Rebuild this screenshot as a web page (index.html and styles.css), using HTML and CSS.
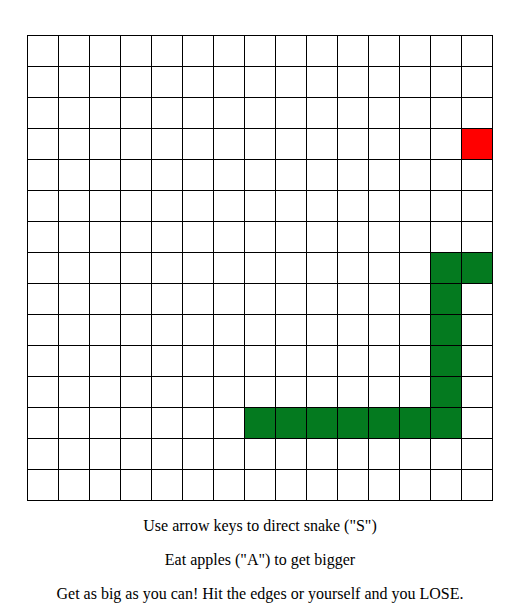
FILE: index.html
```html
<!DOCTYPE html>
<html>
<head>
<meta charset="utf-8">
<link rel="stylesheet" href="styles.css">
</head>
<body>
<div class="board" id="board"></div>
<p>Use arrow keys to direct snake ("S")</p>
<p>Eat apples ("A") to get bigger</p>
<p>Get as big as you can! Hit the edges or yourself and you LOSE.</p>
<script>
var snake = [[7,13],[7,14],[8,13],[9,13],[10,13],[11,13],[12,7],[12,8],[12,9],[12,10],[12,11],[12,12],[12,13]];
var apple = [3,14];
var b = document.getElementById('board');
for (var r = 0; r < 15; r++) {
  for (var c = 0; c < 15; c++) {
    var d = document.createElement('div');
    d.className = 'cell';
    if (r === apple[0] && c === apple[1]) d.className += ' apple';
    for (var i = 0; i < snake.length; i++) {
      if (snake[i][0] === r && snake[i][1] === c) d.className += ' snake';
    }
    b.appendChild(d);
  }
}
</script>
</body>
</html>
```
FILE: styles.css
```css
html, body {
  margin: 0;
  padding: 0;
  background: #fff;
}
body {
  font-family: "Liberation Serif", "Times New Roman", serif;
  font-size: 16px;
  color: #000;
  padding-top: 35px;
}
.board {
  display: grid;
  grid-template-columns: repeat(15, 30px);
  grid-auto-rows: 30px;
  gap: 1px;
  padding: 1px;
  background: #000;
  width: max-content;
  margin-left: 27px;
  margin-bottom: 16px;
}
.cell {
  background: #fff;
}
.cell.snake {
  background: #047a1f;
}
.cell.apple {
  background: #ff0000;
}
p {
  text-align: center;
  margin: 16px 0;
  line-height: 18px;
  padding-right: 2px;
}
```
